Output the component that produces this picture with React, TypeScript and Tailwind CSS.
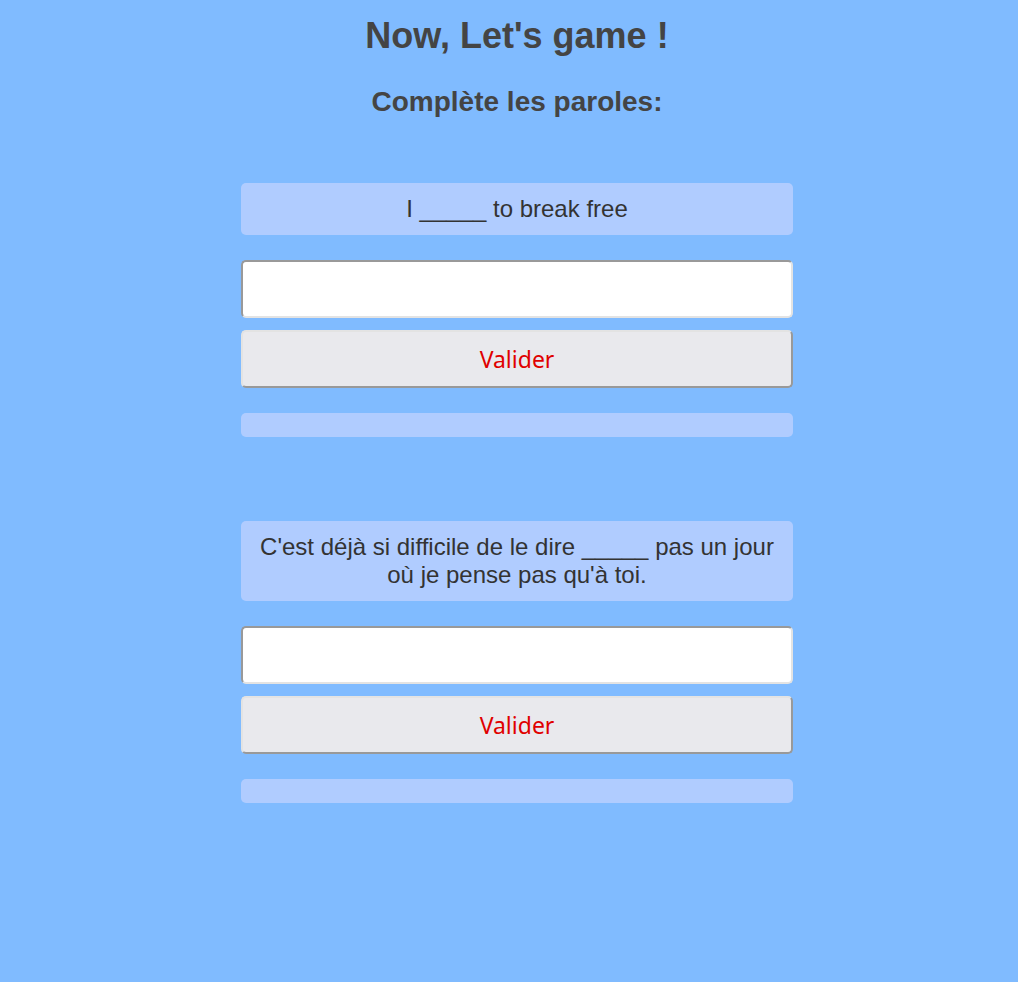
import { useState } from 'react';

interface Question {
  id: number;
  lyric: string;
}

const questions: Question[] = [
  { id: 1, lyric: 'I _____ to break free' },
  { id: 2, lyric: "C'est déjà si difficile de le dire _____ pas un jour où je pense pas qu'à toi." },
];

function QuestionBlock({ q }: { q: Question }) {
  const [answer, setAnswer] = useState('');

  return (
    <div className="flex flex-col">
      <div className="rounded-[5px] bg-[#b0ccff] px-4 py-3 text-center text-[24px] leading-[28px] text-[#333]">
        {q.lyric}
      </div>
      <input
        type="text"
        value={answer}
        onChange={(e) => setAnswer(e.target.value)}
        className="mt-[25px] h-[58px] rounded-[5px] border-2 border-t-[#999] border-l-[#999] border-r-[#e3e3e3] border-b-[#e3e3e3] bg-white px-2 text-[20px] outline-none"
      />
      <button className="mt-3 h-[58px] rounded-[5px] border-2 border-t-[#e3e3e3] border-l-[#e3e3e3] border-r-[#999] border-b-[#999] bg-[#e9e9ed] font-['Noto_Sans',sans-serif] text-[23px] text-[#e00000]">
        Valider
      </button>
      <div className="mt-[25px] h-6 rounded-[5px] bg-[#b0ccff]" />
    </div>
  );
}

export default function App() {
  return (
    <div className="min-h-screen bg-[#80bbff] pl-4 font-['Liberation_Sans',Arial,sans-serif]">
      <h1 className="pt-[14px] text-center text-[36px] font-bold leading-[44px] text-[#444]">Now, Let's game !</h1>
      <h2 className="mt-[26px] text-center text-[28px] font-bold leading-[36px] text-[#444]">Complète les paroles:</h2>
      <div className="mx-auto mt-[63px] flex w-[552px] flex-col gap-[84px]">
        {questions.map((q) => (
          <QuestionBlock key={q.id} q={q} />
        ))}
      </div>
    </div>
  );
}
